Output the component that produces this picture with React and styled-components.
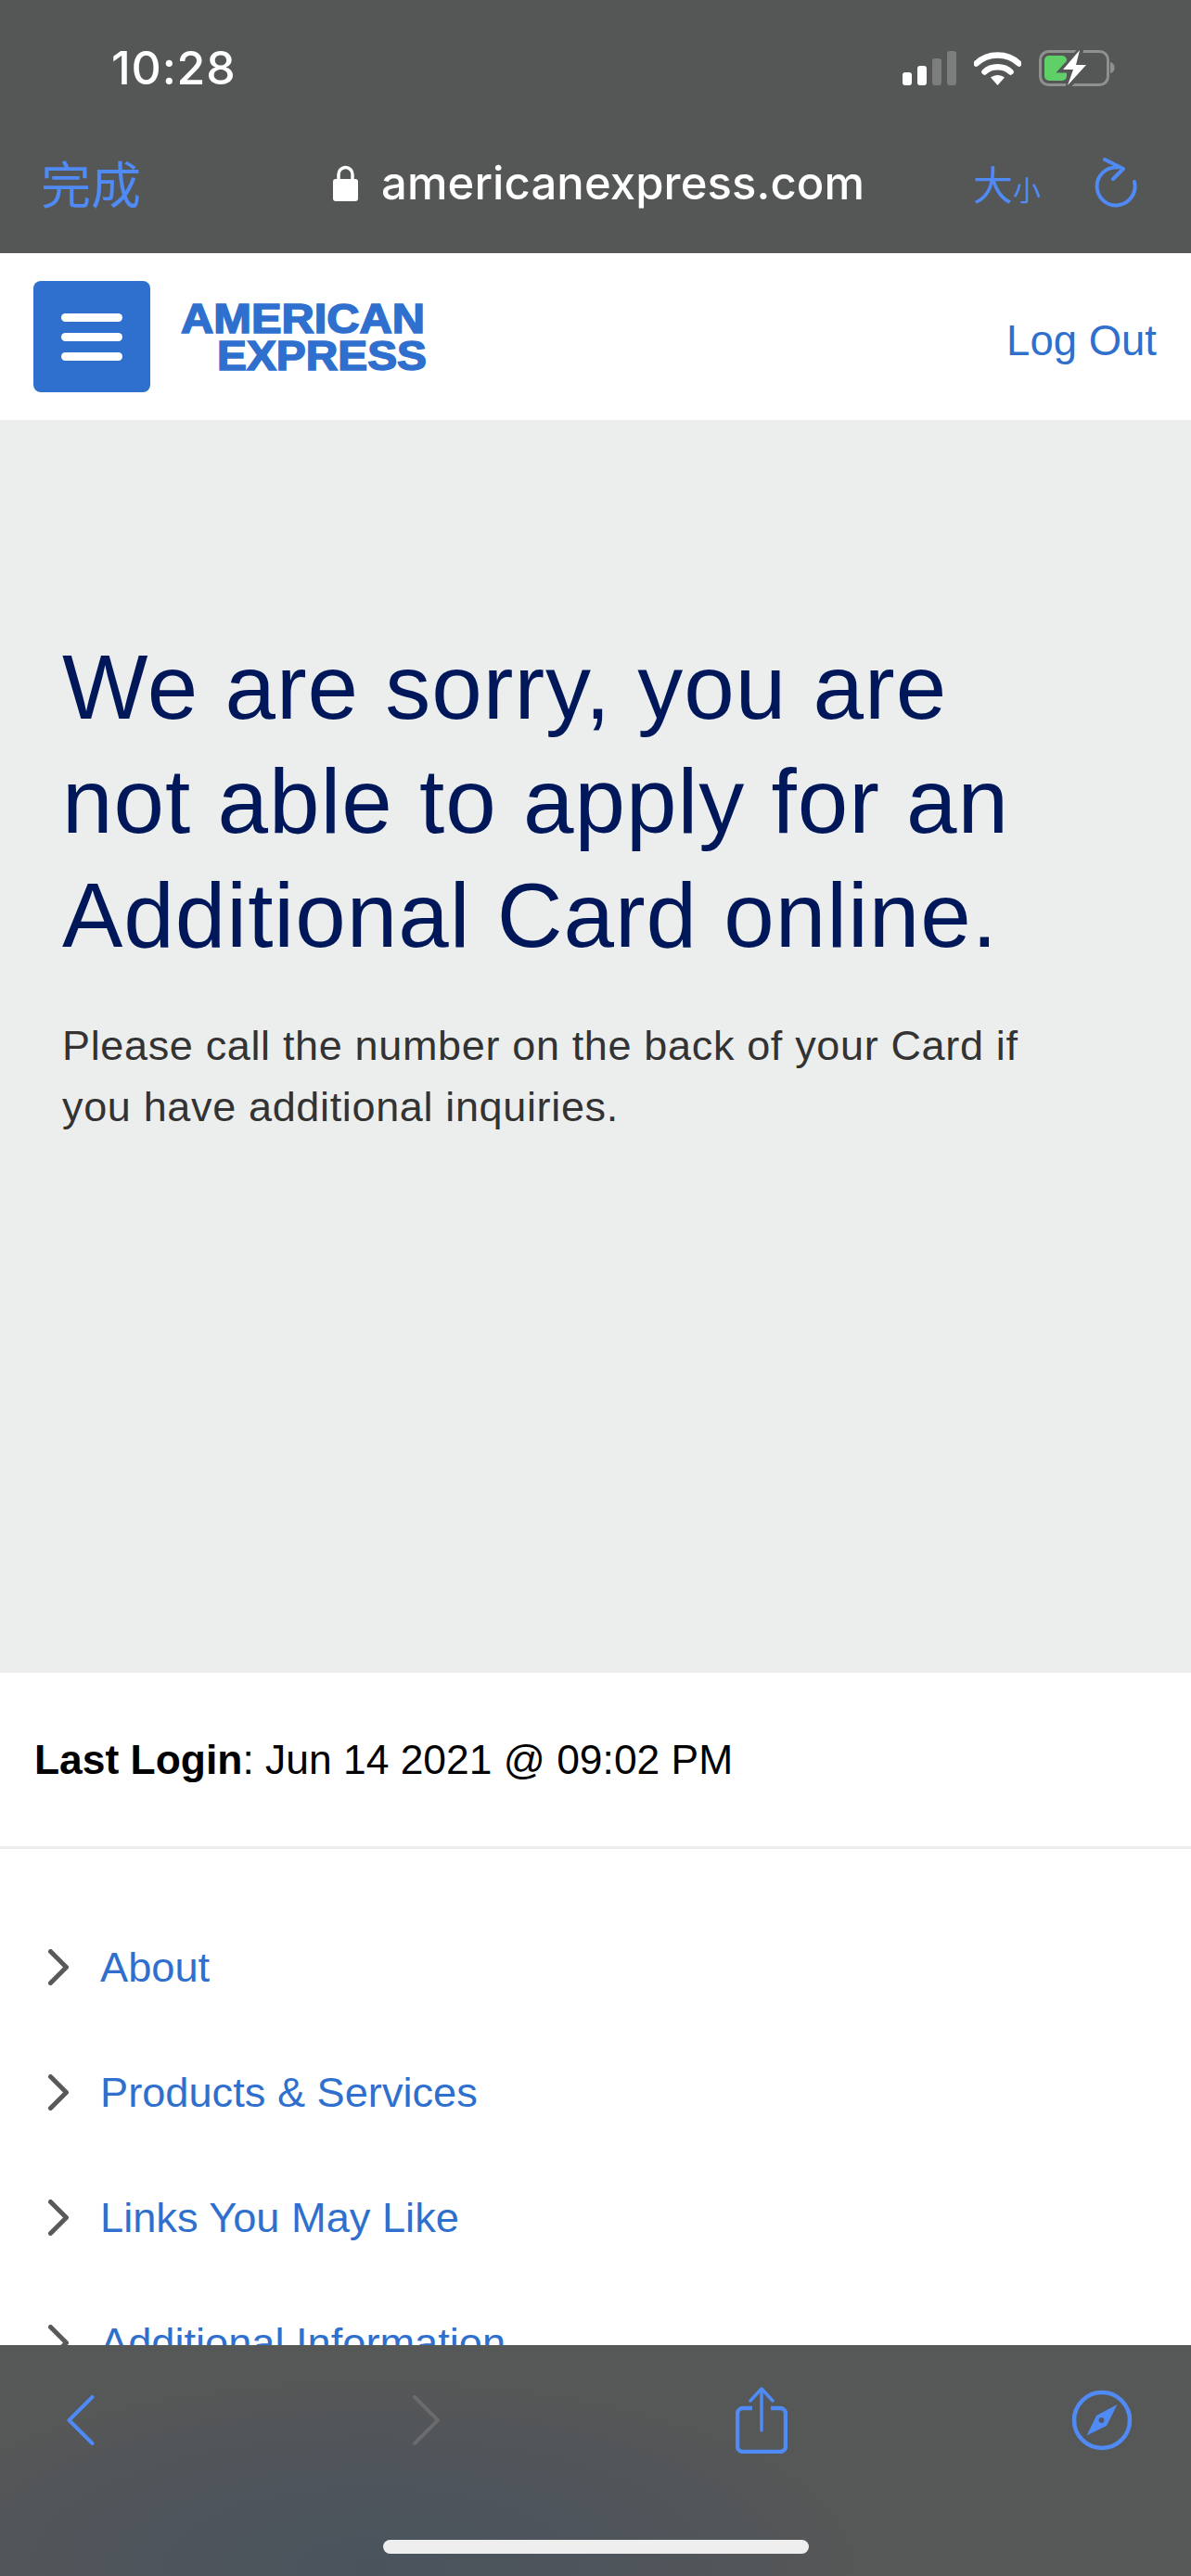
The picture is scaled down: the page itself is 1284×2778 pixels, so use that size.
import styled, { createGlobalStyle } from 'styled-components';

const GlobalStyle = createGlobalStyle`
  html, body {
    margin: 0;
    padding: 0;
    background: #fff;
    font-family: "Liberation Sans", Arial, sans-serif;
  }
`;

const blue = '#2f6fcd';
const safariBlue = '#4f8af5';

const Page = styled.div`
  width: 1284px;
  height: 2778px;
  display: flex;
  flex-direction: column;
  overflow: hidden;
`;

const TopChrome = styled.div`
  height: 273px;
  flex-shrink: 0;
  background: #555656;
  box-sizing: border-box;
`;

const StatusRow = styled.div`
  height: 148px;
  display: flex;
  align-items: flex-start;
  justify-content: space-between;
  padding: 48px 82px 0 120px;
  box-sizing: border-box;
`;

const Time = styled.div`
  font-family: Inter, sans-serif;
  font-weight: 500;
  font-size: 50px;
  line-height: 50px;
  letter-spacing: 0.8px;
  color: #fff;
`;

const StatusIcons = styled.div`
  display: flex;
  align-items: center;
  gap: 19px;
  margin-top: 4px;
`;

const AddressRow = styled.div`
  height: 125px;
  display: flex;
  align-items: flex-start;
  padding: 19px 58px 0 44px;
  box-sizing: border-box;
`;

const DoneButton = styled.div`
  width: 108px;
  font-family: "Noto Sans CJK SC", sans-serif;
  font-size: 54px;
  line-height: 60px;
  color: ${safariBlue};
`;

const Address = styled.div`
  flex: 1;
  display: flex;
  align-items: center;
  gap: 25px;
  padding-left: 207px;
  height: 60px;
  font-family: Inter, sans-serif;
  font-size: 49px;
  font-weight: 500;
  letter-spacing: 0.1px;
  color: #fff;
`;

const SizeLabel = styled.div`
  display: flex;
  align-items: baseline;
  width: 131px;
  height: 60px;
  line-height: 60px;
  font-family: "Noto Sans CJK SC", sans-serif;
  color: ${safariBlue};
`;

const SizeGlyph = styled.span`
  font-size: ${(props) => (props.small ? '30px' : '43px')};
`;

const ReloadButton = styled.div`
  display: flex;
  margin-top: 3px;
`;

const Content = styled.div`
  flex: 1;
  min-height: 0;
  overflow: hidden;
  background: #fff;
`;

const Header = styled.header`
  height: 180px;
  display: flex;
  align-items: center;
  padding: 0 37px 0 36px;
  box-sizing: border-box;
`;

const MenuButton = styled.div`
  width: 126px;
  height: 120px;
  border-radius: 8px;
  background: ${blue};
  display: flex;
  flex-direction: column;
  align-items: center;
  justify-content: center;
  gap: 12px;
`;

const MenuBar = styled.span`
  width: 66px;
  height: 9px;
  border-radius: 5px;
  background: #fff;
`;

const LogoWrap = styled.div`
  margin-left: 28px;
  display: flex;
`;

const LogoText = styled.text`
  font-family: "Liberation Sans", sans-serif;
  font-weight: 700;
  font-size: 44px;
  fill: ${blue};
  stroke: ${blue};
  stroke-width: 1.6px;
`;

const LogOut = styled.a`
  margin-left: auto;
  margin-top: 9px;
  font-size: 45.5px;
  color: ${blue};
`;

const Message = styled.main`
  height: 1351px;
  background: #eceeee;
  padding: 227px 60px 0 67px;
  box-sizing: border-box;
`;

const Title = styled.h1`
  margin: 0 0 46px;
  font-weight: 400;
  font-size: 98px;
  line-height: 123px;
  letter-spacing: 1px;
  color: #00175a;
`;

const Body = styled.p`
  margin: 0;
  font-size: 45px;
  line-height: 66px;
  letter-spacing: 0.65px;
  color: #333;
`;

const LastLogin = styled.div`
  height: 187px;
  display: flex;
  align-items: center;
  padding-left: 37px;
  font-size: 44.4px;
  color: #000;
  border-bottom: 3px solid #ecedee;
  box-sizing: content-box;
`;

const NavList = styled.ul`
  list-style: none;
  margin: 0;
  padding: 60px 0 0 51px;
`;

const NavRow = styled.li`
  height: 135px;
  display: flex;
  align-items: center;
  gap: 34px;
`;

const NavLink = styled.a`
  font-size: 45.2px;
  color: ${blue};
`;

const BottomChrome = styled.div`
  height: 249px;
  flex-shrink: 0;
  background: radial-gradient(ellipse 520px 200px at 400px 240px, #4a535d 0%, #4f555b 55%, #565757 100%);
  display: flex;
  flex-direction: column;
  align-items: center;
`;

const Toolbar = styled.div`
  width: 100%;
  height: 210px;
  box-sizing: border-box;
  padding: 0 0 48px 72px;
  display: grid;
  grid-template-columns: 372px 349px 362px auto;
  align-items: center;
`;

const HomeIndicator = styled.div`
  width: 459px;
  height: 15px;
  border-radius: 8px;
  background: #eeeeee;
`;

const Signal = () => (
  <svg width="58" height="37" viewBox="0 0 58 37">
    <rect x="0" y="23" width="10" height="14" rx="3" fill="#fff" />
    <rect x="16" y="16" width="10" height="21" rx="3" fill="#fff" />
    <rect x="32" y="8" width="10" height="29" rx="3" fill="#7c7d7d" />
    <rect x="48" y="0" width="10" height="37" rx="3" fill="#7c7d7d" />
  </svg>
);

const Wifi = () => (
  <svg width="51" height="37" viewBox="0 0 51 37">
    <path d="M2.5 13.5C15 1.5 36 1.5 48.5 13.5" fill="none" stroke="#fff" strokeWidth="6.5" strokeLinecap="round" />
    <path d="M11.5 22.5C18.5 15.5 32.5 15.5 39.5 22.5" fill="none" stroke="#fff" strokeWidth="6.5" strokeLinecap="round" />
    <path d="M18 28.5C22.5 25 28.5 25 33 28.5L25.5 37Z" fill="#fff" />
  </svg>
);

const Battery = () => (
  <svg width="82" height="42" viewBox="0 0 82 42">
    <rect x="1.5" y="3.5" width="73" height="36" rx="9" fill="none" stroke="#8f9090" strokeWidth="3" />
    <path d="M77 15c3 .5 4.5 3 4.5 6s-1.5 5.5-4.5 6z" fill="#8f9090" />
    <rect x="6" y="8" width="24" height="27" rx="5" fill="#5fd068" />
    <path d="M46 0L24 24H37L31 42L55 17H42Z" fill="#555656" stroke="#555656" strokeWidth="5" />
    <path d="M44 2L26 23H37L31 40L51 18H40Z" fill="#fff" />
  </svg>
);

const Lock = () => (
  <svg width="27" height="40" viewBox="0 0 27 40">
    <path d="M6 18V11a7.5 7.5 0 0 1 15 0v7" fill="none" stroke="#fff" strokeWidth="3.5" />
    <rect x="0" y="16" width="27" height="24" rx="3" fill="#fff" />
  </svg>
);

const Reload = () => (
  <svg width="46" height="54" viewBox="0 0 46 54">
    <path d="M25 10.5A20.5 20.5 0 1 0 43 26" fill="none" stroke={safariBlue} strokeWidth="4" strokeLinecap="round" />
    <path d="M11 2L31 12L20 23" fill="none" stroke={safariBlue} strokeWidth="4" strokeLinecap="round" strokeLinejoin="round" />
  </svg>
);

const Chevron = () => (
  <svg width="23" height="39" viewBox="0 0 23 39">
    <path d="M3.5 2.5L20.5 19.5L3.5 36.5" fill="none" stroke="#58595b" strokeWidth="5" strokeLinecap="round" strokeLinejoin="round" />
  </svg>
);

const BackIcon = () => (
  <svg width="30" height="54" viewBox="0 0 30 54">
    <path d="M27.5 2L2.5 27L27.5 52" fill="none" stroke={safariBlue} strokeWidth="4" strokeLinecap="round" strokeLinejoin="round" />
  </svg>
);

const ForwardIcon = () => (
  <svg width="31" height="54" viewBox="0 0 31 54">
    <path d="M3 2L28 27L3 52" fill="none" stroke="#6a6b6c" strokeWidth="4" strokeLinecap="round" strokeLinejoin="round" />
  </svg>
);

const ShareIcon = () => (
  <svg width="56" height="72" viewBox="0 0 56 72">
    <path d="M18 23H8a6 6 0 0 0-6 6v35a6 6 0 0 0 6 6h40a6 6 0 0 0 6-6V29a6 6 0 0 0-6-6H38" fill="none" stroke={safariBlue} strokeWidth="4.5" />
    <path d="M28 3V47" fill="none" stroke={safariBlue} strokeWidth="3.5" strokeLinecap="round" />
    <path d="M16 15L28 2L40 15" fill="none" stroke={safariBlue} strokeWidth="3.5" strokeLinecap="round" strokeLinejoin="round" />
  </svg>
);

const CompassIcon = () => (
  <svg width="66" height="66" viewBox="0 0 66 66">
    <circle cx="33" cy="33" r="30" fill="none" stroke={safariBlue} strokeWidth="4.5" />
    <path fillRule="evenodd" d="M49.5 16L38 39L27 28ZM16.5 49.5L27 28L38 39ZM32.5 30a3 3 0 1 0 .01 0Z" fill={safariBlue} />
  </svg>
);

const links = ['About', 'Products & Services', 'Links You May Like', 'Additional Information'];

const App = () => (
  <Page>
    <GlobalStyle />
    <TopChrome>
      <StatusRow>
        <Time>10:28</Time>
        <StatusIcons>
          <Signal />
          <Wifi />
          <Battery />
        </StatusIcons>
      </StatusRow>
      <AddressRow>
        <DoneButton>完成</DoneButton>
        <Address>
          <Lock />
          <span>americanexpress.com</span>
        </Address>
        <SizeLabel>
          <SizeGlyph>大</SizeGlyph>
          <SizeGlyph small>小</SizeGlyph>
        </SizeLabel>
        <ReloadButton>
          <Reload />
        </ReloadButton>
      </AddressRow>
    </TopChrome>
    <Content>
      <Header>
        <MenuButton>
          <MenuBar />
          <MenuBar />
          <MenuBar />
        </MenuButton>
        <LogoWrap>
          <svg width="280" height="100" viewBox="0 0 280 100">
            <LogoText x="5" y="46" textLength="263" lengthAdjust="spacingAndGlyphs">AMERICAN</LogoText>
            <LogoText x="44" y="86" textLength="226" lengthAdjust="spacingAndGlyphs">EXPRESS</LogoText>
          </svg>
        </LogoWrap>
        <LogOut>Log Out</LogOut>
      </Header>
      <Message>
        <Title>
          We are sorry, you are
          <br />
          not able to apply for an
          <br />
          Additional Card online.
        </Title>
        <Body>
          Please call the number on the back of your Card if
          <br />
          you have additional inquiries.
        </Body>
      </Message>
      <LastLogin>
        <span>
          <b>Last Login</b>: Jun 14 2021 @ 09:02 PM
        </span>
      </LastLogin>
      <NavList>
        {links.map((label) => (
          <NavRow key={label}>
            <Chevron />
            <NavLink>{label}</NavLink>
          </NavRow>
        ))}
      </NavList>
    </Content>
    <BottomChrome>
      <Toolbar>
        <BackIcon />
        <ForwardIcon />
        <ShareIcon />
        <CompassIcon />
      </Toolbar>
      <HomeIndicator />
    </BottomChrome>
  </Page>
);

export default App;
